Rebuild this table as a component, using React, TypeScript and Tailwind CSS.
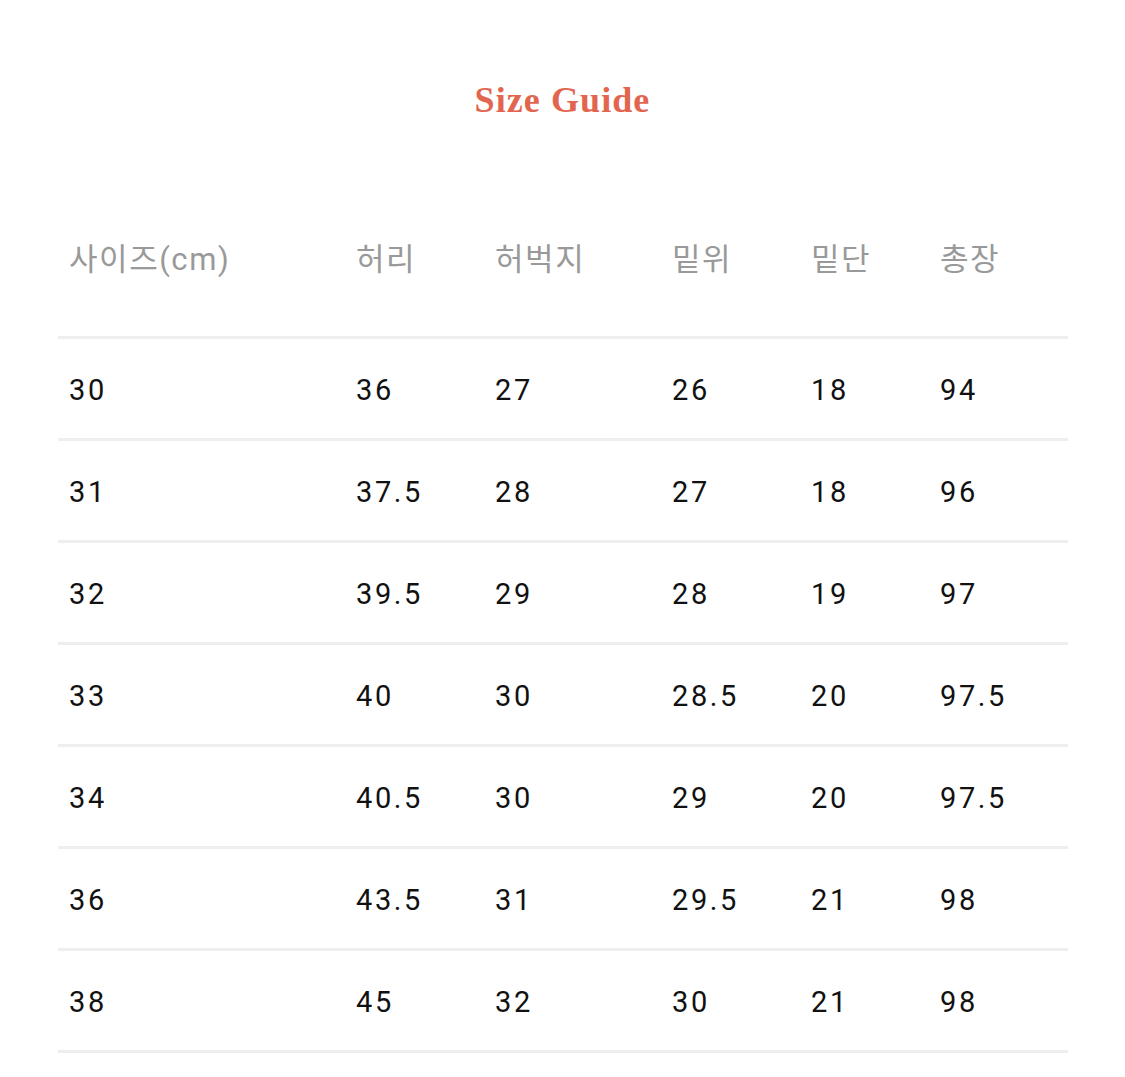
const headers = ["사이즈(cm)", "허리", "허벅지", "밑위", "밑단", "총장"];

const rows = [
  ["30", "36", "27", "26", "18", "94"],
  ["31", "37.5", "28", "27", "18", "96"],
  ["32", "39.5", "29", "28", "19", "97"],
  ["33", "40", "30", "28.5", "20", "97.5"],
  ["34", "40.5", "30", "29", "20", "97.5"],
  ["36", "43.5", "31", "29.5", "21", "98"],
  ["38", "45", "32", "30", "21", "98"],
];

const cols = "grid grid-cols-[287px_139px_177px_139px_129px_139px]";

export default function App() {
  return (
    <div className="min-h-[1077px] w-[1125px] bg-white font-['Roboto','Noto_Sans_CJK_KR',sans-serif]">
      {/* Title */}
      <div className="h-[183px] pt-[80px]">
        <h1 className="h-[40px] text-center font-['Liberation_Serif',serif] text-[36px] font-bold leading-[40px] tracking-[0.03em] text-[#e2664f]">
          Size Guide
        </h1>
      </div>

      <div className="mx-[58px] w-[1010px]">
        {/* Header */}
        <div className={`${cols} h-[153px] items-center`}>
          {headers.map((h) => (
            <div key={h} className="pl-[11px] text-[31px] leading-none tracking-[0.05em] text-[#999999]">
              {h}
            </div>
          ))}
        </div>

        {/* Body */}
        <div className="border-b-[3px] border-[#eeeeee]">
          {rows.map((r, i) => (
            <div key={i} className={`${cols} h-[102px] items-center border-t-[3px] border-[#eeeeee]`}>
              {r.map((v, j) => (
                <div key={j} className="pl-[11px] pt-[4px] text-[29px] leading-none tracking-[0.09em] text-[#111111]">
                  {v}
                </div>
              ))}
            </div>
          ))}
        </div>
      </div>
    </div>
  );
}
